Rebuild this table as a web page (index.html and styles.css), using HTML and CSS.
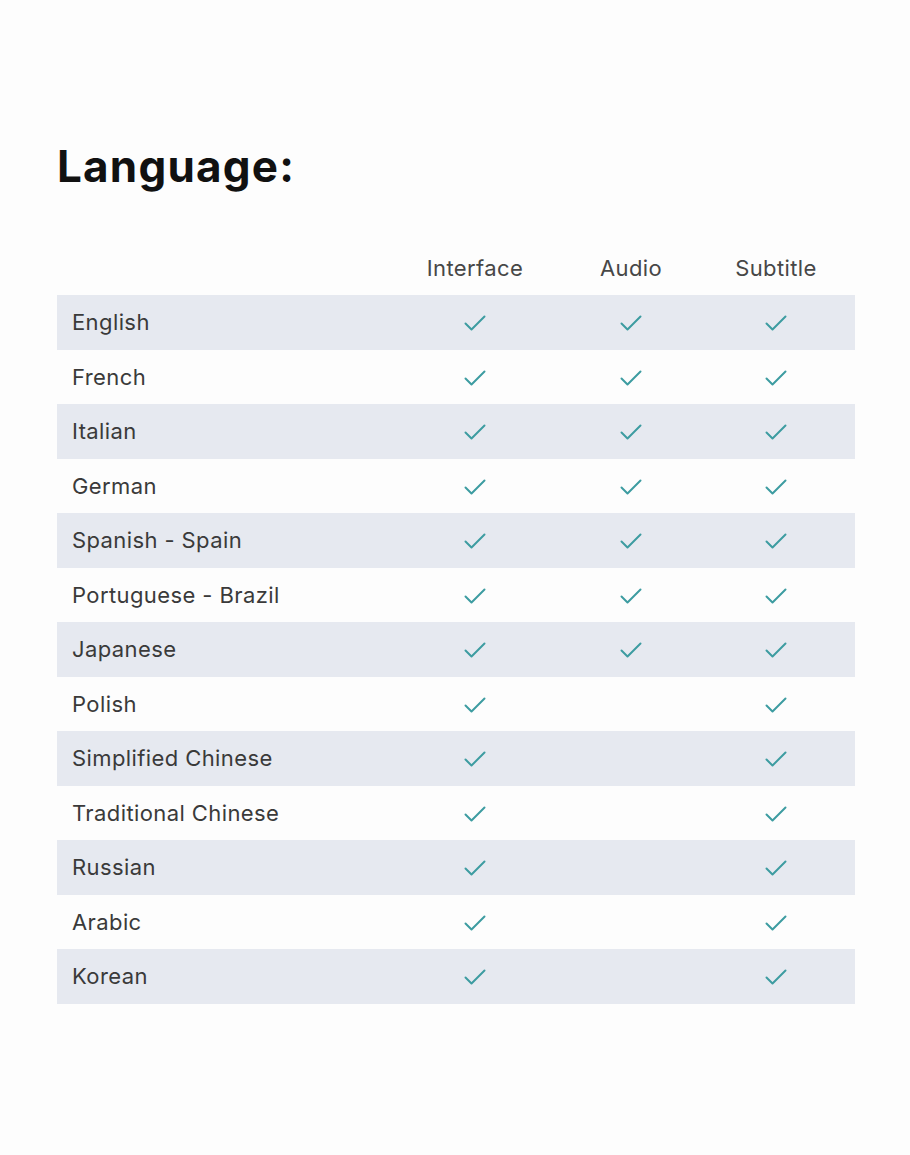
FILE: index.html
```html
<!DOCTYPE html>
<html lang="en">
<head>
<meta charset="utf-8">
<title>Language</title>
<link rel="stylesheet" href="styles.css">
</head>
<body>
<main class="page">
  <h1 class="title">Language:</h1>
  <div class="table">
    <div class="row head">
      <div class="cell name"></div>
      <div class="cell">Interface</div>
      <div class="cell">Audio</div>
      <div class="cell">Subtitle</div>
    </div>
    <div class="row alt"><div class="cell name">English</div><div class="cell"><svg class="chk" viewBox="0 0 22 18"><path d="M1.5 9.5 L7.5 15.5 L20.5 2.5"/></svg></div><div class="cell"><svg class="chk" viewBox="0 0 22 18"><path d="M1.5 9.5 L7.5 15.5 L20.5 2.5"/></svg></div><div class="cell"><svg class="chk" viewBox="0 0 22 18"><path d="M1.5 9.5 L7.5 15.5 L20.5 2.5"/></svg></div></div>
    <div class="row"><div class="cell name">French</div><div class="cell"><svg class="chk" viewBox="0 0 22 18"><path d="M1.5 9.5 L7.5 15.5 L20.5 2.5"/></svg></div><div class="cell"><svg class="chk" viewBox="0 0 22 18"><path d="M1.5 9.5 L7.5 15.5 L20.5 2.5"/></svg></div><div class="cell"><svg class="chk" viewBox="0 0 22 18"><path d="M1.5 9.5 L7.5 15.5 L20.5 2.5"/></svg></div></div>
    <div class="row alt"><div class="cell name">Italian</div><div class="cell"><svg class="chk" viewBox="0 0 22 18"><path d="M1.5 9.5 L7.5 15.5 L20.5 2.5"/></svg></div><div class="cell"><svg class="chk" viewBox="0 0 22 18"><path d="M1.5 9.5 L7.5 15.5 L20.5 2.5"/></svg></div><div class="cell"><svg class="chk" viewBox="0 0 22 18"><path d="M1.5 9.5 L7.5 15.5 L20.5 2.5"/></svg></div></div>
    <div class="row"><div class="cell name">German</div><div class="cell"><svg class="chk" viewBox="0 0 22 18"><path d="M1.5 9.5 L7.5 15.5 L20.5 2.5"/></svg></div><div class="cell"><svg class="chk" viewBox="0 0 22 18"><path d="M1.5 9.5 L7.5 15.5 L20.5 2.5"/></svg></div><div class="cell"><svg class="chk" viewBox="0 0 22 18"><path d="M1.5 9.5 L7.5 15.5 L20.5 2.5"/></svg></div></div>
    <div class="row alt"><div class="cell name">Spanish - Spain</div><div class="cell"><svg class="chk" viewBox="0 0 22 18"><path d="M1.5 9.5 L7.5 15.5 L20.5 2.5"/></svg></div><div class="cell"><svg class="chk" viewBox="0 0 22 18"><path d="M1.5 9.5 L7.5 15.5 L20.5 2.5"/></svg></div><div class="cell"><svg class="chk" viewBox="0 0 22 18"><path d="M1.5 9.5 L7.5 15.5 L20.5 2.5"/></svg></div></div>
    <div class="row"><div class="cell name">Portuguese - Brazil</div><div class="cell"><svg class="chk" viewBox="0 0 22 18"><path d="M1.5 9.5 L7.5 15.5 L20.5 2.5"/></svg></div><div class="cell"><svg class="chk" viewBox="0 0 22 18"><path d="M1.5 9.5 L7.5 15.5 L20.5 2.5"/></svg></div><div class="cell"><svg class="chk" viewBox="0 0 22 18"><path d="M1.5 9.5 L7.5 15.5 L20.5 2.5"/></svg></div></div>
    <div class="row alt"><div class="cell name">Japanese</div><div class="cell"><svg class="chk" viewBox="0 0 22 18"><path d="M1.5 9.5 L7.5 15.5 L20.5 2.5"/></svg></div><div class="cell"><svg class="chk" viewBox="0 0 22 18"><path d="M1.5 9.5 L7.5 15.5 L20.5 2.5"/></svg></div><div class="cell"><svg class="chk" viewBox="0 0 22 18"><path d="M1.5 9.5 L7.5 15.5 L20.5 2.5"/></svg></div></div>
    <div class="row"><div class="cell name">Polish</div><div class="cell"><svg class="chk" viewBox="0 0 22 18"><path d="M1.5 9.5 L7.5 15.5 L20.5 2.5"/></svg></div><div class="cell"></div><div class="cell"><svg class="chk" viewBox="0 0 22 18"><path d="M1.5 9.5 L7.5 15.5 L20.5 2.5"/></svg></div></div>
    <div class="row alt"><div class="cell name">Simplified Chinese</div><div class="cell"><svg class="chk" viewBox="0 0 22 18"><path d="M1.5 9.5 L7.5 15.5 L20.5 2.5"/></svg></div><div class="cell"></div><div class="cell"><svg class="chk" viewBox="0 0 22 18"><path d="M1.5 9.5 L7.5 15.5 L20.5 2.5"/></svg></div></div>
    <div class="row"><div class="cell name">Traditional Chinese</div><div class="cell"><svg class="chk" viewBox="0 0 22 18"><path d="M1.5 9.5 L7.5 15.5 L20.5 2.5"/></svg></div><div class="cell"></div><div class="cell"><svg class="chk" viewBox="0 0 22 18"><path d="M1.5 9.5 L7.5 15.5 L20.5 2.5"/></svg></div></div>
    <div class="row alt"><div class="cell name">Russian</div><div class="cell"><svg class="chk" viewBox="0 0 22 18"><path d="M1.5 9.5 L7.5 15.5 L20.5 2.5"/></svg></div><div class="cell"></div><div class="cell"><svg class="chk" viewBox="0 0 22 18"><path d="M1.5 9.5 L7.5 15.5 L20.5 2.5"/></svg></div></div>
    <div class="row"><div class="cell name">Arabic</div><div class="cell"><svg class="chk" viewBox="0 0 22 18"><path d="M1.5 9.5 L7.5 15.5 L20.5 2.5"/></svg></div><div class="cell"></div><div class="cell"><svg class="chk" viewBox="0 0 22 18"><path d="M1.5 9.5 L7.5 15.5 L20.5 2.5"/></svg></div></div>
    <div class="row alt"><div class="cell name">Korean</div><div class="cell"><svg class="chk" viewBox="0 0 22 18"><path d="M1.5 9.5 L7.5 15.5 L20.5 2.5"/></svg></div><div class="cell"></div><div class="cell"><svg class="chk" viewBox="0 0 22 18"><path d="M1.5 9.5 L7.5 15.5 L20.5 2.5"/></svg></div></div>
  </div>
</main>
</body>
</html>
```

FILE: styles.css
```css
html, body {
  margin: 0;
  padding: 0;
  background: #fdfdfd;
}

.page {
  width: 798px;
  padding: 136px 0 0 57px;
  font-family: "Inter", "Noto Sans", sans-serif;
  color: #333;
}

.title {
  margin: 0;
  font-size: 44px;
  line-height: 60px;
  font-weight: 700;
  color: #111;
  letter-spacing: 1.2px;
}

.table {
  margin-top: 44px;
  display: flex;
  flex-direction: column;
}

.row {
  display: grid;
  grid-template-columns: 328px 180px 132px 158px;
  height: 54.5px;
  align-items: center;
}

.row.alt {
  background: #e6e9f0;
}

.row.head {
  height: 55px;
}

.cell {
  display: flex;
  justify-content: center;
  align-items: center;
  font-size: 22px;
  font-weight: 400;
  letter-spacing: 0.4px;
  color: #474747;
}

.cell.name {
  justify-content: flex-start;
  padding-left: 15px;
  color: #3a3a3a;
}

.chk {
  width: 22px;
  height: 18px;
  margin-top: 2px;
  fill: none;
  stroke: #3d9ca1;
  stroke-width: 2;
  stroke-linecap: round;
  stroke-linejoin: round;
}
```
